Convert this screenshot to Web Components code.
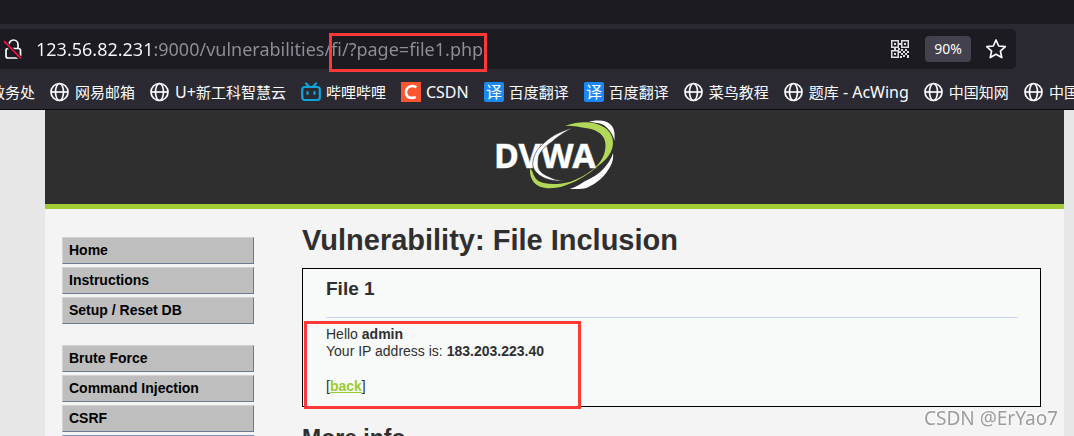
<!DOCTYPE html>
<html lang="zh-CN">
<head>
<meta charset="utf-8">
<title>Vulnerability: File Inclusion</title>
<style>
  body { margin: 0; font-family: "Liberation Sans", Arial, sans-serif; }
</style>
</head>
<body>
<browser-window>
  <address-bar slot="bar" value="123.56.82.231:9000/vulnerabilities/fi/?page=file1.php" zoom="90%"></address-bar>
  <bookmark-bar slot="bar">
    <bookmark-item>教务处</bookmark-item>
    <bookmark-item icon="globe">网易邮箱</bookmark-item>
    <bookmark-item icon="globe"><span>U+</span>新工科智慧云</bookmark-item>
    <bookmark-item icon="bili">哔哩哔哩</bookmark-item>
    <bookmark-item icon="csdn"><span>CSDN</span></bookmark-item>
    <bookmark-item icon="fanyi">百度翻译</bookmark-item>
    <bookmark-item icon="fanyi">百度翻译</bookmark-item>
    <bookmark-item icon="globe">菜鸟教程</bookmark-item>
    <bookmark-item icon="globe">题库<span> - AcWing</span></bookmark-item>
    <bookmark-item icon="globe">中国知网</bookmark-item>
    <bookmark-item icon="globe">中国知网</bookmark-item>
  </bookmark-bar>
  <dvwa-page>
    <menu-group slot="menu">
      <menu-item>Home</menu-item>
      <menu-item>Instructions</menu-item>
      <menu-item>Setup / Reset DB</menu-item>
    </menu-group>
    <menu-group slot="menu">
      <menu-item>Brute Force</menu-item>
      <menu-item>Command Injection</menu-item>
      <menu-item>CSRF</menu-item>
      <menu-item current>File Inclusion</menu-item>
    </menu-group>
    <vulnerable-box heading="File 1" user="admin" ip="183.203.223.40"></vulnerable-box>
  </dvwa-page>
  <water-mark slot="mark">CSDN @ErYao7</water-mark>
</browser-window>

<script>
const define = (name, html, setup) => customElements.define(name, class extends HTMLElement {
  connectedCallback() {
    if (this.shadowRoot) return;
    const t = document.createElement('template');
    t.innerHTML = html;
    this.attachShadow({ mode: 'open' }).append(t.content.cloneNode(true));
    if (setup) setup(this, this.shadowRoot);
  }
});

define('browser-window', `
  <style>
    :host { display: flex; flex-direction: column; height: 100vh; position: relative; overflow: hidden; background: #2b2a33; }
    .tabs { flex: none; height: 24px; background: #1c1b22; }
    header { flex: none; border-bottom: 1px solid #0c0c0d; }
    main { flex: 1; min-height: 0; overflow: auto; scrollbar-width: none; background: #e7e7e7; }
  </style>
  <div class="tabs"></div>
  <header><slot name="bar"></slot></header>
  <main><slot></slot></main>
  <slot name="mark"></slot>`);

define('red-frame', `
  <style>:host { display: block; box-sizing: border-box; border: 3px solid #ff3838; pointer-events: none; }</style>`);

define('address-bar', `
  <style>
    :host { display: block; padding: 5px 58px 5px 0; font-family: "Noto Sans", "Open Sans", sans-serif; }
    .field { position: relative; display: flex; align-items: center; height: 40px; border-radius: 0 5px 5px 0; background: #1c1b22; padding-right: 9px; }
    .lock { flex: none; margin: 0 12px 0 4px; }
    input { flex: 1; min-width: 0; border: 0; padding: 0; height: 32px; outline: 0; font: 18px/32px "Noto Sans", "Open Sans", sans-serif;
      background: linear-gradient(90deg, #fbfbfe 117px, #8f8f97 117px); -webkit-background-clip: text; background-clip: text; color: transparent; caret-color: #fff; }
    button { border: 0; padding: 0; background: none; color: #fbfbfe; height: 26px; font: 14px/26px "Noto Sans", sans-serif; display: grid; place-items: center; }
    .qr { width: 20px; margin-right: 15px; }
    .zoom { width: 46px; margin-right: 14px; border-radius: 4px; background: #42414d; }
    .star { width: 22px; }
    red-frame { position: absolute; left: 329px; top: 4px; width: 158px; height: 39px; }
  </style>
  <div class="field">
    <svg class="lock" width="20" height="24" viewBox="0 0 20 24" fill="none" stroke="#fbfbfe" stroke-width="1.7">
      <path d="M5 12V7.500a4.500 4.500 0 0 1 9 0V12"/><rect x="2" y="11.500" width="14.500" height="9.500" rx="2"/>
      <path d="M0 4.500L17 22" stroke="#1c1b22" stroke-width="4"/><path d="M0 4L17 21.500" stroke="#ff0f44" stroke-width="1.700"/>
    </svg>
    <input type="text" aria-label="Address">
    <button class="qr" aria-label="QR code">
      <svg width="18" height="18" viewBox="0 0 18 18" fill="#dcdce2">
        <path fill-rule="evenodd" d="M0 0h8v8H0zM1.500 1.500v5h5v-5zM10 0h8v8h-8zM11.500 1.500v5h5v-5zM0 10h8v8H0zM1.500 11.500v5h5v-5z"/>
        <path d="M3 3h2v2H3zM13 3h2v2h-2zM3 13h2v2H3zM8 3h2v2H8zM3 8h2v2H3zM7 8h2v2H7zM10 9h2v2h-2zM14 9h2v2h-2zM12 11h2v2h-2zM16 11h2v2h-2zM10 13h2v2h-2zM14 13h2v2h-2zM12 15h2v2h-2zM16 15h2v3h-2zM8 11h2v2H8zM9 16h2v2H9z"/>
      </svg>
    </button>
    <button class="zoom"></button>
    <button class="star" aria-label="Bookmark this page">
      <svg width="22" height="22" viewBox="0 0 22 22" fill="none" stroke="#fbfbfe" stroke-width="1.700" stroke-linejoin="round">
        <path d="M11 2l2.700 6 6.600.7-4.900 4.400 1.400 6.500L11 16.200l-5.800 3.400 1.400-6.500L1.700 8.700 8.300 8z"/>
      </svg>
    </button>
    <red-frame></red-frame>
  </div>`, (el, root) => {
    root.querySelector('input').value = el.getAttribute('value');
    root.querySelector('.zoom').textContent = el.getAttribute('zoom');
  });

define('bookmark-bar', `
  <style>:host { display: flex; gap: 15px; height: 35px; align-items: center; margin-left: -10px; overflow: hidden; }</style>
  <slot></slot>`);

const icons = {
  globe: `<svg width="20" height="20" viewBox="0 0 20 20" fill="none" stroke="#fbfbfe" stroke-width="1.700"><circle cx="9.500" cy="10" r="8.500"/><ellipse cx="9.500" cy="10" rx="4" ry="8.500"/><path d="M1 10h17"/></svg>`,
  bili: `<svg width="20" height="20" viewBox="0 0 20 20" fill="none" stroke="#0fa5dc" stroke-width="2.200" stroke-linecap="round"><rect x="1.200" y="5" width="17.600" height="13" rx="2.500"/><path d="M5 1.500l3 3M15 1.500l-3 3M6.500 10v2M13.500 10v2"/></svg>`,
  csdn: `<svg width="20" height="20" viewBox="0 0 20 20"><path fill="#fc5531" d="M0 0h20v20H0z"/><path d="M15.300 5.300C11 2.500 5 4.500 5 10.500c0 5.500 5.500 6.500 9.700 4.300" fill="none" stroke="#fff" stroke-width="2.600"/></svg>`,
  fanyi: `<svg width="20" height="20" viewBox="0 0 20 20"><rect width="20" height="20" rx="2" fill="#1b88f5"/><text x="2" y="16" font-size="16" fill="#fff" font-family="Noto Sans CJK SC, sans-serif">译</text></svg>`
};
define('bookmark-item', `
  <style>
    :host { display: block; flex: none; }
    a { display: flex; align-items: center; gap: 5px; color: #fbfbfe; text-decoration: none; white-space: pre; font: 15px/24px "Noto Sans CJK SC", sans-serif; }
    svg { display: block; }
    ::slotted(span) { font: 16px/24px "Noto Sans", "Open Sans", sans-serif; }
  </style>
  <a href="#"><div><slot></slot></div></a>`, (el, root) => {
    const icon = icons[el.getAttribute('icon')];
    if (icon) root.querySelector('a').insertAdjacentHTML('afterbegin', icon);
  });

define('dvwa-logo', `
  <style>:host { display: block; } svg { display: block; }</style>
  <svg width="124" height="72" viewBox="0 0 124 72" role="img" aria-label="DVWA">
    <path fill="#b1d857" d="M72 6.700C80 4 88 3 94 3.300c16 1 26 9 26 20.500 0 9-6 17-16 24-9 8-19 14-30 18-7 3-13 3.700-20 3.500-11-1-18-8-17-20l2.500 3.400c2 7 6 10.300 11.500 11.300 8 2 17 1 26.500-1.300 8-3 16-7 22-12 8-7 13-14 13-24.700 0-9-7-15-18.500-16.700C87 8 80 6.500 72 6.700z"/>
    <path fill="#fff" d="M96 2.700c5-1.300 9-1.500 13-1 8 1 12 6 12.500 12.600V22c-1-4-2.500-8-5.500-11-3-4-6-5.500-10-6.700zM120 34.300c1 7-2 13-6 18.400-5 7-12 12.500-20 16-6 1.700-12 1.500-17.500 1 5-1 10-4 14.500-7 8-3.500 15-8 20-13.400 4-5 7-9 9-15z"/>
    <text x="1" y="49" font-family="Noto Sans, Open Sans, sans-serif" font-weight="700" font-size="34" fill="#fff" stroke="#7d878f" stroke-width="1" paint-order="stroke">DVWA</text>
    <path fill="#fff" stroke="#2f2f2f" stroke-width=".6" d="M79 9.300C68 12 59 17 52.500 22.700 45 29 41 35 40 42c-1 5 1 9 4 12 6 6 16 8.500 27 8C64 61 60 60 56 57.700 49 55 45 51 45 46c0-4 0-7 1-10 3-6 8-10 13-13.300C65 17 72 13 79 9.300z"/>
  </svg>`);

define('dvwa-page', `
  <style>
    :host { display: block; margin: 0 10px 0 45px; background: #f4f4f4; color: #2f2f2f; }
    header { display: flex; justify-content: center; height: 85px; padding-top: 9px; background: #2f2f2f; border-bottom: 5px solid #a1cc33; }
    .columns { display: flex; gap: 48px; padding: 0 23px 0 17px; }
    nav { flex: none; width: 192px; padding-top: 28px; display: flex; flex-direction: column; gap: 21px; }
    article { flex: 1; min-width: 0; padding-top: 13px; }
    h1 { margin: 0 0 10px; font-size: 29px; line-height: 36px; }
    h2 { margin: 17px 0; font-size: 23px; line-height: 28px; }
  </style>
  <header><dvwa-logo></dvwa-logo></header>
  <div class="columns">
    <nav aria-label="Menu"><slot name="menu"></slot></nav>
    <article>
      <h1>Vulnerability: File Inclusion</h1>
      <slot></slot>
      <h2>More info</h2>
    </article>
  </div>`);

define('menu-group', `
  <style>:host { display: flex; flex-direction: column; gap: 3px; }</style><slot></slot>`);

define('menu-item', `
  <style>
    :host { display: block; }
    a { display: block; box-sizing: border-box; height: 27px; padding-left: 6px; border: 1px solid; border-color: #d2d2d2 #6b7892 #6b7892 #d2d2d2;
      background: #bebebe; color: #000; font-size: 14px; line-height: 25px; font-weight: 700; text-decoration: none; }
    :host([current]) a { background: #a1cc33; border-top-color: #7891b8; }
  </style>
  <a href="#"><slot></slot></a>`);

define('vulnerable-box', `
  <style>
    :host { display: block; position: relative; border: 1px solid #000; background: #f8faf9; padding: 8px 22px 11px 23px; font-size: 14px; line-height: 17px; }
    h3 { margin: 0; font-size: 19px; line-height: 24px; }
    hr { margin: 16px 0 8px; border: 0; height: 1px; background: #c6d7f5; }
    p { margin: 0 0 18px; }
    p:last-of-type { margin-bottom: 0; }
    a { color: #99cc33; font-weight: 700; }
    red-frame { position: absolute; left: 1px; top: 52px; width: 277px; height: 88px; }
  </style>
  <h3></h3>
  <hr>
  <p>Hello <strong class="user"></strong><br>Your IP address is: <strong class="ip"></strong></p>
  <p>[<a href="#">back</a>]</p>
  <red-frame></red-frame>`, (el, root) => {
    root.querySelector('h3').textContent = el.getAttribute('heading');
    root.querySelector('.user').textContent = el.getAttribute('user');
    root.querySelector('.ip').textContent = el.getAttribute('ip');
  });

define('water-mark', `
  <style>
    :host { position: absolute; right: 16px; bottom: 4px; font: 19px/28px "Noto Sans", sans-serif; color: #9c9c9c; text-shadow: -1px -1px 0 #fff; pointer-events: none; }
  </style><slot></slot>`);
</script>
</body>
</html>
